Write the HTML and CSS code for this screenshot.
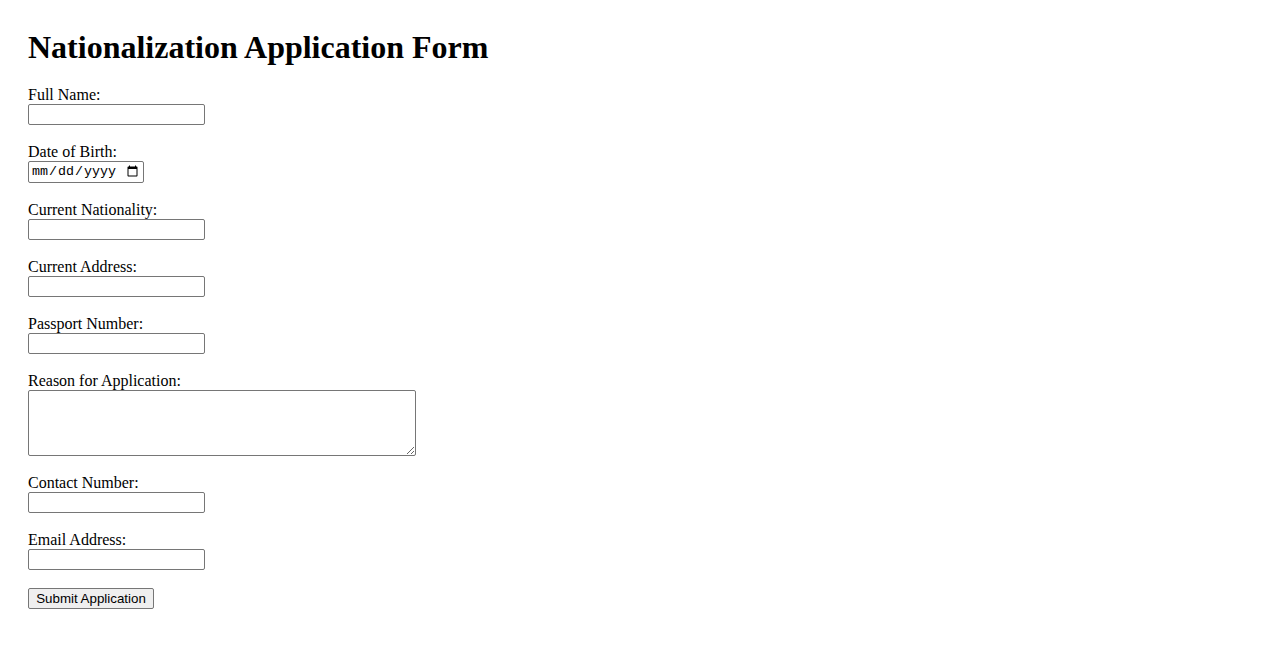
FILE: index.html
```html
<!DOCTYPE html>
<html lang="en">
<head>
<meta charset="utf-8">
<title>Nationalization Application Form</title>
<link rel="stylesheet" href="styles.css">
</head>
<body>
<div class="page">
  <h1 class="title">Nationalization Application Form</h1>
  <form class="form">
    <div class="field">
      <label class="label" for="name">Full Name:</label>
      <input class="control text" type="text" id="name">
    </div>
    <div class="field">
      <label class="label" for="dob">Date of Birth:</label>
      <input class="control date" type="date" id="dob">
    </div>
    <div class="field">
      <label class="label" for="nat">Current Nationality:</label>
      <input class="control text" type="text" id="nat">
    </div>
    <div class="field">
      <label class="label" for="addr">Current Address:</label>
      <input class="control text" type="text" id="addr">
    </div>
    <div class="field">
      <label class="label" for="pass">Passport Number:</label>
      <input class="control text" type="text" id="pass">
    </div>
    <div class="field">
      <label class="label" for="reason">Reason for Application:</label>
      <textarea class="control area" id="reason"></textarea>
    </div>
    <div class="field">
      <label class="label" for="phone">Contact Number:</label>
      <input class="control text" type="tel" id="phone">
    </div>
    <div class="field">
      <label class="label" for="email">Email Address:</label>
      <input class="control text" type="email" id="email">
    </div>
    <div class="actions">
      <button class="submit" type="submit">Submit Application</button>
    </div>
  </form>
</div>
</body>
</html>
```

FILE: styles.css
```css
html, body {
  margin: 0;
  padding: 0;
  background: #ffffff;
}

body {
  font-family: "Liberation Serif", "Times New Roman", serif;
  font-size: 16px;
  color: #000000;
}

.page {
  padding: 28px 28px;
}

.title {
  font-size: 32px;
  font-weight: bold;
  line-height: 37px;
  margin: 1px 0 20px 0;
}

.form {
  display: flex;
  flex-direction: column;
}

.field {
  display: flex;
  flex-direction: column;
  align-items: flex-start;
  margin-bottom: 18px;
}

.label {
  display: block;
  line-height: 18px;
  height: 18px;
}

.control {
  box-sizing: border-box;
  margin: 0;
  border: 1px solid #767676;
  border-radius: 2px;
  background: #ffffff;
  font-family: "Liberation Mono", monospace;
  font-size: 13.33px;
  padding: 1px 2px;
}

.text {
  width: 177px;
  height: 21px;
}

.date {
  width: 116px;
  height: 22px;
  padding: 1px 2px;
  font-size: 13.33px;
}

.area {
  width: 388px;
  height: 66px;
  resize: both;
  padding: 2px;
}

.actions {
  display: flex;
}

.submit {
  box-sizing: border-box;
  margin: 0;
  height: 21px;
  width: 126px;
  padding: 1px 6px;
  font-family: "Liberation Sans", Arial, sans-serif;
  font-size: 13.33px;
  color: #000000;
  background: #efefef;
  border: 1px solid #767676;
  border-radius: 2px;
}
```
